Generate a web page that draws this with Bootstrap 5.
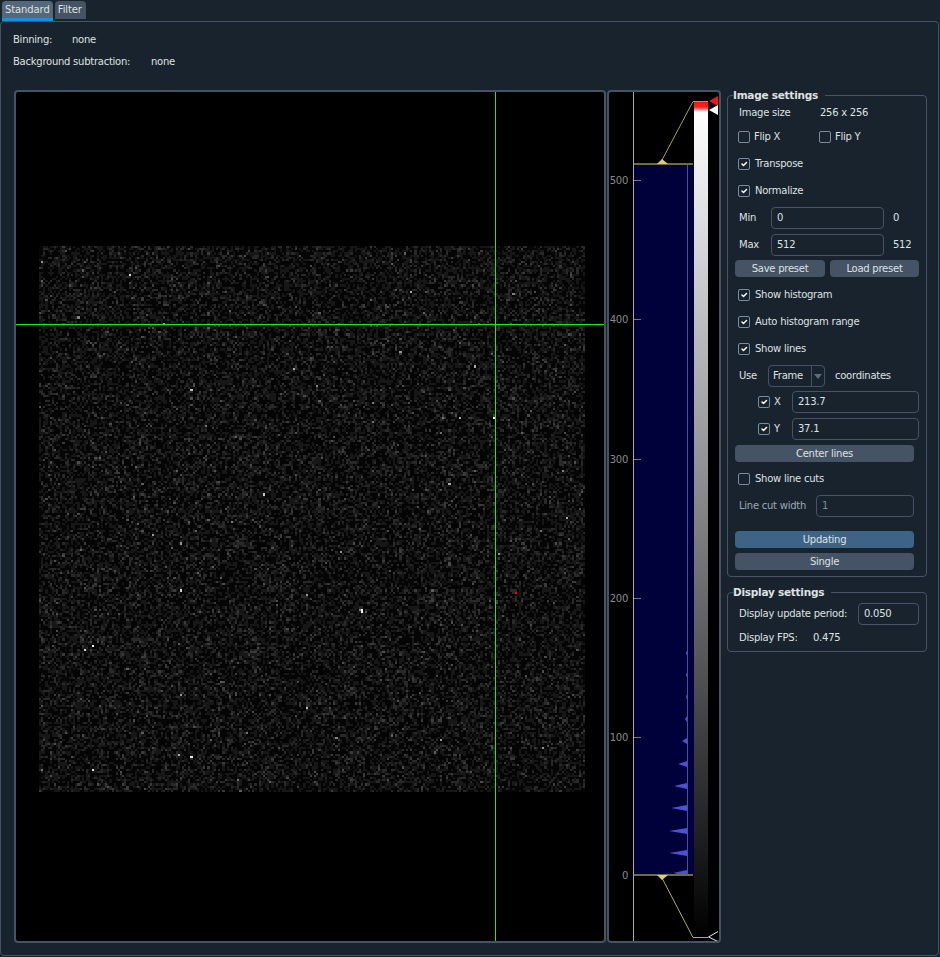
<!doctype html>
<html lang="en">
  <head>
    <meta charset="UTF-8" />
    <title>Image viewer</title>
    <link href="https://cdn.jsdelivr.net/npm/bootstrap@5.3.0/dist/css/bootstrap.min.css" rel="stylesheet" />
    <style>
      html, body { height: 957px; overflow: hidden; }
      body { background: #19232d; color: #dfe1e2; font: 10px/14px "DejaVu Sans", sans-serif; letter-spacing: -0.25px; }

      .tabbar { height: 21px; padding-left: 2px; border: 0; gap: 2px; align-items: flex-start; }
      .tabbar .nav-link { height: 18px; margin: 1px 0 0; padding: 1px 4px 0 3px; border: 0; border-radius: 4px 4px 0 0; background: #455364; color: #dfe1e2; font-size: 10px; letter-spacing: -0.1px; line-height: 15px; }
      .tabbar .nav-link.active { height: 20px; margin-top: 1px; padding: 1px 3px 0; background: #54687a; color: #dfe1e2; border-bottom: 3px solid #1a8fe0; border-radius: 4px 4px 0 0; }

      .pane { height: 935px; width: 939px; border: 1px solid #455364; border-radius: 4px; padding-left: 13px; }
      .inforow { height: 22px; }
      .infotop { padding-top: 7px; height: 65px; margin-left: -1px; }
      .lbl-bin { width: 59px; }
      .lbl-bg { width: 138px; }

      .workarea { gap: 1px; }
      .viewbox { width: 592px; height: 853px; margin-top: 3px; background: #000; border: 2px solid #455364; border-radius: 4px; position: relative; overflow: hidden; }
      .histbox { width: 114px; height: 853px; margin-top: 3px; background: #000; border: 2px solid #455364; border-radius: 4px; overflow: hidden; }
      .histbox svg { display: block; width: 110px; height: 849px; }
      .histbox text { fill: #8a8a8a; font: 10px "DejaVu Sans", sans-serif; text-anchor: end; }
      .noise { position: absolute; left: 23px; top: 154px; width: 546px; height: 546px; image-rendering: pixelated; }
      .line-h { position: absolute; left: 0; right: 0; top: 232px; height: 1px; background: #14f014; }
      .line-v { position: absolute; top: 0; bottom: 0; left: 479px; width: 1px; background: #35dc35; }

      .sidecol { width: 200px; margin-left: 5px; margin-top: 1px; }
      .groupbox { border: 1px solid #455364; border-radius: 4px; padding: 0 0 0 7px; margin: 0; min-width: 0; }
      .groupbox legend { float: none; width: auto; margin: 0 0 0 -2px; padding: 0 7px 0 0; font-size: 10.5px; line-height: 14px; font-weight: 700; color: #dfe1e2; }
      .group-img { height: 489px; }
      .group-disp { height: 67px; margin-top: 8px; }

      .setrow { height: 27px; padding-left: 4px; white-space: nowrap; }
      .setrow-first { height: 21px; padding-left: 4px; margin-top: 0; white-space: nowrap; }
      .setrow-disp { height: 21px; padding-left: 4px; margin-top: 4px; white-space: nowrap; }
      .setrow-flip { height: 27px; padding-left: 3px; }
      .setrow-use { height: 26px; padding-top: 2px; }
      .chkrow { padding-left: 3px; gap: 5px; }
      .chkrow-sub { padding-left: 23px; gap: 4px; }
      .setrow .form-check-input, .setrow-flip .form-check-input { width: 12px; height: 12px; margin: 0; flex: none; background-color: transparent; border: 1px solid #788d9c; border-radius: 2px; box-shadow: none; }

      .flipcell { width: 81px; gap: 4px; }
      .w-size { width: 81px; }
      .w-minmax { width: 32px; }
      .w-use { width: 29px; }
      .w-axis { width: 14px; }
      .w-cut { width: 77px; }
      .w-period { width: 119px; }
      .w-fps { width: 74px; }

      .numfield { height: 22px; padding: 0 5px; font-size: 10px; letter-spacing: -0.25px; line-height: 20px; min-height: 0; background: #19232d; color: #dfe1e2; border: 1px solid #455364; border-radius: 4px; box-shadow: none; }
      .numfield:disabled { background: #19232d; color: #788d9c; }
      .nf-minmax { width: 113px; flex: none; }
      .nf-axis { width: 127px; flex: none; }
      .nf-cut { width: 98px; flex: none; }
      .nf-period { width: 61px; flex: none; }
      .after-field { margin-left: 9px; }
      .muted-lbl { color: #9aa9b4; }

      .flatbtn { height: 17px; padding: 0; border: 0; border-radius: 4px; background: #455364; color: #dfe1e2; font-size: 10px; letter-spacing: -0.25px; line-height: 17px; }
      .flatbtn.on { background: #3d6485; }
      .btn-save { width: 90px; }
      .btn-load { width: 89px; margin-left: 5px; }
      .btn-wide { width: 179px; display: block; }
      .btnrow { margin: 2px 0 4px; }
      .btn-center { margin: 3px 0 3px; }
      .btn-upd { margin-top: 12px; }
      .btn-single { margin-top: 5px; }

      .combo { width: 57px; height: 22px; border: 1px solid #455364; border-radius: 4px; }
      .combo-text { flex: 1; padding-left: 4px; line-height: 20px; }
      .combo-arrow { width: 13px; border-left: 1px solid #455364; position: relative; }
      .combo-arrow::after { content: ""; position: absolute; left: 2px; top: 8px; border: 4px solid transparent; border-top: 5px solid #5e6e7c; border-bottom: 0; }
      .coords { margin-left: 10px; }
    </style>
  </head>

  <body class="m-0">
    <ul class="nav nav-tabs tabbar">
      <li class="nav-item"><a class="nav-link active" href="#">Standard</a></li>
      <li class="nav-item"><a class="nav-link" href="#">Filter</a></li>
    </ul>

    <div class="pane">
      <div class="infotop">
        <div class="inforow d-flex align-items-center"><span class="lbl-bin">Binning:</span><span>none</span></div>
        <div class="inforow d-flex align-items-center"><span class="lbl-bg">Background subtraction:</span><span>none</span></div>
      </div>

      <div class="workarea d-flex align-items-start">
        <div class="viewbox">
          <canvas class="noise" id="noise" width="256" height="256"></canvas>
          <div class="line-h"></div>
          <div class="line-v"></div>
        </div>

        <div class="histbox">
          <svg viewBox="609 92 110 849" xmlns="http://www.w3.org/2000/svg">
            <defs>
              <linearGradient id="grad" x1="0" y1="0" x2="0" y2="1">
                <stop offset="0" stop-color="#ff1010" />
                <stop offset="0.006" stop-color="#ff2020" />
                <stop offset="0.012" stop-color="#ffffff" />
                <stop offset="1" stop-color="#000000" />
              </linearGradient>
            </defs>
            <rect x="634" y="164" width="60" height="711" fill="#00003a" />
            <path id="spikes" fill="#4f4fd6" d="" />
            <line x1="687.5" y1="164" x2="687.5" y2="875" stroke="#4e4e9c" />
            <line x1="633.5" y1="92" x2="633.5" y2="941" stroke="#a8a8a8" />
            <g stroke="#777">
              <line x1="634" y1="180.5" x2="641" y2="180.5" />
              <line x1="634" y1="319.5" x2="641" y2="319.5" />
              <line x1="634" y1="459.5" x2="641" y2="459.5" />
              <line x1="634" y1="598.5" x2="641" y2="598.5" />
              <line x1="634" y1="737.5" x2="641" y2="737.5" />
              <line x1="634" y1="875.5" x2="641" y2="875.5" />
            </g>
            <text x="628" y="184">500</text>
            <text x="628" y="323">400</text>
            <text x="628" y="463">300</text>
            <text x="628" y="602">200</text>
            <text x="628" y="741">100</text>
            <text x="628" y="879">0</text>
            <rect x="694" y="102" width="14" height="835" fill="url(#grad)" />
            <line x1="634" y1="164" x2="693" y2="164" stroke="#6e6e3c" stroke-width="2" />
            <line x1="634" y1="875" x2="693" y2="875" stroke="#6e6e3c" stroke-width="2" />
            <polyline points="662,160 693,101.5 708,101.5" fill="none" stroke="#a3a352" />
            <polyline points="662,878 693,937.5 708,937.5" fill="none" stroke="#b0b054" />
            <polygon points="657,164 662,159 668,164" fill="#d8d070" />
            <polygon points="657,875 668,875 662,880" fill="#d8d070" />
            <polygon points="709,101 718,96 718,106" fill="#ff0f1f" />
            <polygon points="709,110 718,105 718,115" fill="#ffffff" />
            <polyline points="718,931.5 708.5,937 718,941.5" fill="none" stroke="#e8e8e8" />
          </svg>
        </div>

        <div class="sidecol">
          <fieldset class="groupbox group-img">
            <legend>Image settings</legend>
            <div class="setrow-first d-flex align-items-center"><span class="w-size">Image size</span><span>256 x 256</span></div>
            <div class="setrow-flip d-flex align-items-center">
              <label class="flipcell d-flex align-items-center"><input class="form-check-input" type="checkbox" />Flip X</label>
              <label class="d-flex align-items-center gap-1"><input class="form-check-input" type="checkbox" />Flip Y</label>
            </div>
            <label class="setrow chkrow d-flex align-items-center"><input class="form-check-input" type="checkbox" checked />Transpose</label>
            <label class="setrow chkrow d-flex align-items-center"><input class="form-check-input" type="checkbox" checked />Normalize</label>
            <div class="setrow d-flex align-items-center"><span class="w-minmax">Min</span><input class="form-control numfield nf-minmax" value="0" /><span class="after-field">0</span></div>
            <div class="setrow d-flex align-items-center"><span class="w-minmax">Max</span><input class="form-control numfield nf-minmax" value="512" /><span class="after-field">512</span></div>
            <div class="d-flex btnrow">
              <button class="btn flatbtn btn-save">Save preset</button>
              <button class="btn flatbtn btn-load">Load preset</button>
            </div>
            <label class="setrow chkrow d-flex align-items-center"><input class="form-check-input" type="checkbox" checked />Show histogram</label>
            <label class="setrow chkrow d-flex align-items-center"><input class="form-check-input" type="checkbox" checked />Auto histogram range</label>
            <label class="setrow chkrow d-flex align-items-center"><input class="form-check-input" type="checkbox" checked />Show lines</label>
            <div class="setrow setrow-use d-flex align-items-center">
              <span class="w-use">Use</span>
              <div class="combo d-flex"><span class="combo-text">Frame</span><span class="combo-arrow"></span></div>
              <span class="coords">coordinates</span>
            </div>
            <div class="setrow chkrow-sub d-flex align-items-center"><input class="form-check-input" type="checkbox" checked /><span class="w-axis">X</span><input class="form-control numfield nf-axis" value="213.7" /></div>
            <div class="setrow chkrow-sub d-flex align-items-center"><input class="form-check-input" type="checkbox" checked /><span class="w-axis">Y</span><input class="form-control numfield nf-axis" value="37.1" /></div>
            <button class="btn flatbtn btn-wide btn-center">Center lines</button>
            <label class="setrow chkrow d-flex align-items-center"><input class="form-check-input" type="checkbox" />Show line cuts</label>
            <div class="setrow d-flex align-items-center"><span class="w-cut muted-lbl">Line cut width</span><input class="form-control numfield nf-cut" value="1" disabled /></div>
            <button class="btn flatbtn on btn-wide btn-upd">Updating</button>
            <button class="btn flatbtn btn-wide btn-single">Single</button>
          </fieldset>

          <fieldset class="groupbox group-disp">
            <legend>Display settings</legend>
            <div class="setrow-disp d-flex align-items-center"><span class="w-period">Display update period:</span><input class="form-control numfield nf-period" value="0.050" /></div>
            <div class="setrow d-flex align-items-center"><span class="w-fps">Display FPS:</span><span>0.475</span></div>
          </fieldset>
        </div>
      </div>
    </div>

    <script src="https://cdn.jsdelivr.net/npm/bootstrap@5.3.0/dist/js/bootstrap.bundle.min.js"></script>
    <script>
      // fake detector frame: poisson noise plus the hot pixels seen on screen
      const ctx = document.getElementById('noise').getContext('2d');
      const img = ctx.createImageData(256, 256);
      let seed = 12345;
      function rnd() {
        seed = (seed * 1664525 + 1013904223) % 4294967296;
        return seed / 4294967296;
      }
      function poisson(l) {
        const lim = Math.exp(-l);
        let k = 0, p = 1;
        do { k++; p *= rnd(); } while (p > lim);
        return k - 1;
      }
      function setPx(x, y, r, g, b) {
        const i = (y * 256 + x) * 4;
        img.data[i] = r; img.data[i + 1] = g; img.data[i + 2] = b; img.data[i + 3] = 255;
      }
      for (let y = 0; y < 256; y++) {
        for (let x = 0; x < 256; x++) {
          const v = 5 + poisson(0.7) * 18;
          setPx(x, y, v, v, v);
        }
      }
      // screen x, screen y, grey level
      const hot = [
        [129,274,210],[191,390,190],[263,495,200],[293,369,170],[42,263,140],[164,324,150],[78,317,130],[206,427,120],
        [412,292,170],[476,366,170],[461,418,170],[495,418,255],[450,483,170],[401,351,150],[566,517,170],[562,470,130],
        [373,403,130],[317,386,130],[513,294,130],[93,645,255],[84,651,220],[93,769,230],[191,756,235],[179,754,170],
        [181,590,210],[181,544,150],[153,535,150],[181,696,150],[307,707,190],[307,595,150],[232,523,130],[363,611,255],
        [363,609,240],[359,610,130],[498,554,150],[341,553,150],[337,738,130],[442,740,150],[543,749,150]
      ];
      hot.forEach(([sx, sy, v]) => {
        setPx(Math.floor((sx - 39) / 2.133), Math.floor((sy - 246) / 2.133), v, v, v);
      });
      setPx(Math.floor((515 - 39) / 2.133), Math.floor((593 - 246) / 2.133), 255, 0, 0);
      ctx.putImageData(img, 0, 0);

      // histogram spikes, all pointing left from the curve
      const spikes = [[653,1],[675,1],[697,1],[719,2],[741,5],[764,9],[786,13],[808,16],[831,18],[853,18],[873,14]];
      document.getElementById('spikes').setAttribute('d', spikes.map(([y, w]) =>
        `M687 ${y - 3}L${687 - w} ${y}L687 ${y + 3}Z`).join(''));
    </script>
  </body>
</html>
